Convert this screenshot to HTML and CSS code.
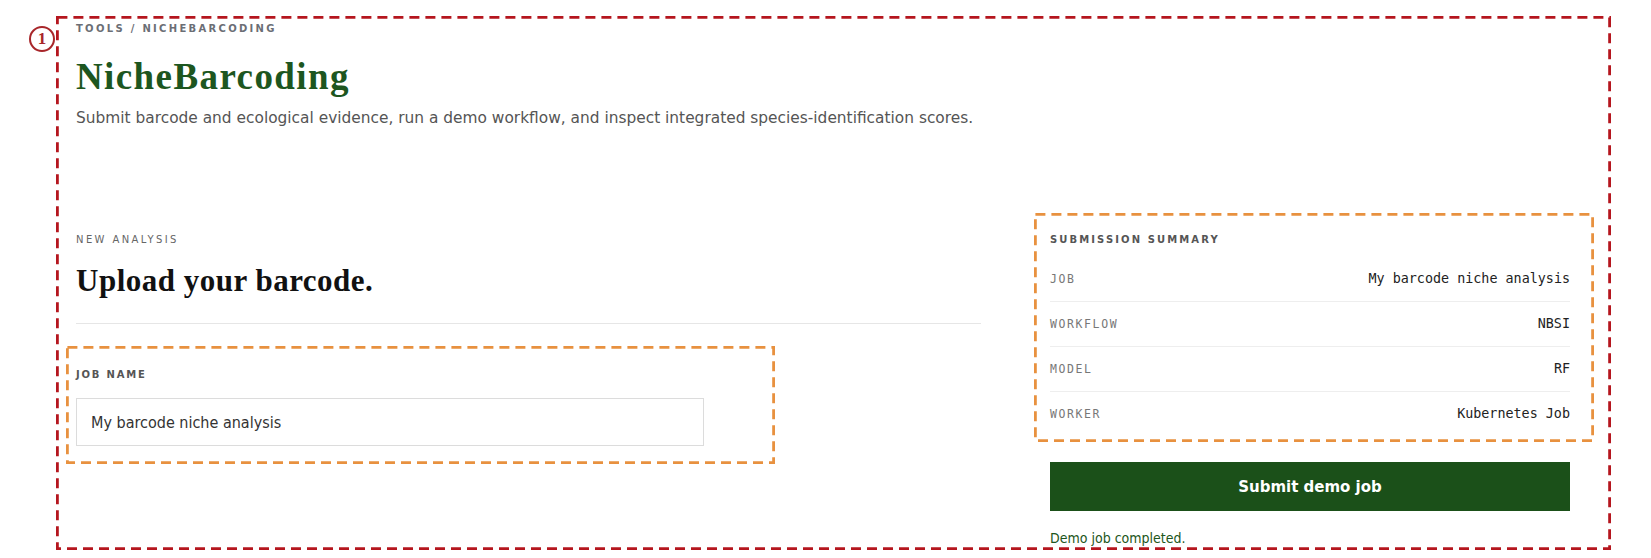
FILE: index.html
```
<!DOCTYPE html>
<html lang="en">
<head>
  <meta charset="UTF-8">
  <title>NicheBarcoding</title>
  <link rel="stylesheet" href="styles.css">
</head>
<body>
  <div class="frame">
    <svg class="dash dash-red"><rect></rect></svg>
    <span class="marker">1</span>

    <header class="page-head">
      <div class="crumbs">Tools / NicheBarcoding</div>
      <h1>NicheBarcoding</h1>
      <p class="lead">Submit barcode and ecological evidence, run a demo workflow, and inspect integrated species-identification scores.</p>
    </header>

    <div class="layout">
      <section class="analysis">
        <div class="eyebrow">New analysis</div>
        <h2>Upload your barcode.</h2>
        <hr>
        <div class="field">
          <svg class="dash dash-orange"><rect></rect></svg>
          <label for="job_name">Job name</label>
          <input type="text" id="job_name" value="My barcode niche analysis">
        </div>
      </section>

      <aside class="side">
        <div class="summary">
          <svg class="dash dash-orange"><rect></rect></svg>
          <div class="summary-title">Submission summary</div>
          <div class="row"><span class="key">Job</span><span class="val">My barcode niche analysis</span></div>
          <div class="row"><span class="key">Workflow</span><span class="val">NBSI</span></div>
          <div class="row"><span class="key">Model</span><span class="val">RF</span></div>
          <div class="row"><span class="key">Worker</span><span class="val">Kubernetes Job</span></div>
        </div>
        <button type="button" class="submit">Submit demo job</button>
        <div class="status">Demo job completed.</div>
      </aside>
    </div>
  </div>
</body>
</html>
```

FILE: styles.css
```
body {
  margin: 0;
  background: #fff;
  font-family: "DejaVu Sans", Verdana, sans-serif;
  color: #333;
}

/* annotation frames (dashed overlays) */
.frame {
  position: relative;
  margin: 16px 40px 0 56px;
  padding: 7px 41px 2px 20px;
}

.dash {
  position: absolute;
  overflow: visible;
  pointer-events: none;
}

.dash rect {
  x: 1.4px;
  y: 1.4px;
  width: calc(100% - 2.8px);
  height: calc(100% - 2.8px);
  fill: none;
  stroke-width: 2.8px;
  stroke-dasharray: 10 6;
}

.dash-red {
  top: 0;
  left: 0;
  width: 100%;
  height: 100%;
}

.dash-red rect {
  stroke: #b5161e;
}

.dash-orange rect {
  stroke: #e8913f;
}

.marker {
  position: absolute;
  left: -27px;
  top: 10px;
  width: 22px;
  height: 22px;
  border: 2px solid #a8262a;
  border-radius: 50%;
  color: #a8262a;
  font: bold 17px/22px "Liberation Serif", serif;
  text-align: center;
}

.crumbs {
  font-size: 10px;
  line-height: 12px;
  font-weight: bold;
  letter-spacing: 2.3px;
  text-transform: uppercase;
  color: #6b6e75;
}

h1 {
  margin: 21px 0 0;
  font: bold 37px/42px "Liberation Serif", serif;
  letter-spacing: 1.4px;
  color: #1d5620;
}

.lead {
  margin: 9px 0 0;
  font-size: 15.4px;
  line-height: 22px;
  color: #555;
}

.layout {
  display: grid;
  grid-template-columns: 1fr 520px;
  column-gap: 69px;
  margin-top: 103px;
}

.eyebrow {
  font-size: 10px;
  line-height: 16px;
  letter-spacing: 2.4px;
  text-transform: uppercase;
  color: #666;
}

h2 {
  margin: 16px 0 0;
  font: bold 31px/33px "Liberation Serif", serif;
  letter-spacing: 0.5px;
  color: #111;
}

hr {
  margin: 26px 0 0;
  border: 0;
  border-top: 1px solid #e6e6e6;
}

.field {
  position: relative;
  max-width: 690px;
  margin-top: 43px;
}

.field .dash {
  top: -21px;
  left: -10px;
  width: calc(100% + 19px);
  height: calc(100% + 39px);
}

.field label {
  display: block;
  font-size: 10px;
  line-height: 16px;
  font-weight: bold;
  letter-spacing: 1.8px;
  text-transform: uppercase;
  color: #555;
}

.field input {
  display: block;
  box-sizing: border-box;
  width: 628px;
  height: 48px;
  margin-top: 15px;
  padding: 0 14px;
  border: 1px solid #dcdcdc;
  font-family: "DejaVu Sans Condensed", "DejaVu Sans", sans-serif;
  font-size: 16px;
  color: #333;
}

.summary {
  position: relative;
}

.summary .dash {
  top: -19px;
  left: -16px;
  width: calc(100% + 40px);
  height: calc(100% + 25px);
}

.summary-title {
  font-size: 10px;
  line-height: 16px;
  font-weight: bold;
  letter-spacing: 2.1px;
  text-transform: uppercase;
  color: #555;
  margin-bottom: 9px;
}

.row {
  display: flex;
  justify-content: space-between;
  align-items: center;
  padding: 12px 0;
  line-height: 20px;
  border-bottom: 1px solid #eee;
  font-family: "DejaVu Sans Mono", monospace;
}

.row:last-child {
  border-bottom: 0;
}

.key {
  font-size: 11.5px;
  letter-spacing: 1.6px;
  text-transform: uppercase;
  color: #777;
}

.val {
  font-size: 13.4px;
  color: #222;
}

.submit {
  display: block;
  width: 100%;
  height: 49px;
  margin-top: 26px;
  border: 0;
  background: #1b5019;
  color: #fff;
  font-family: "DejaVu Sans", sans-serif;
  font-size: 15px;
  font-weight: bold;
}

.status {
  margin-top: 17px;
  font-family: "DejaVu Sans Condensed", "DejaVu Sans", sans-serif;
  font-size: 14px;
  line-height: 20px;
  color: #1d5620;
}
```
